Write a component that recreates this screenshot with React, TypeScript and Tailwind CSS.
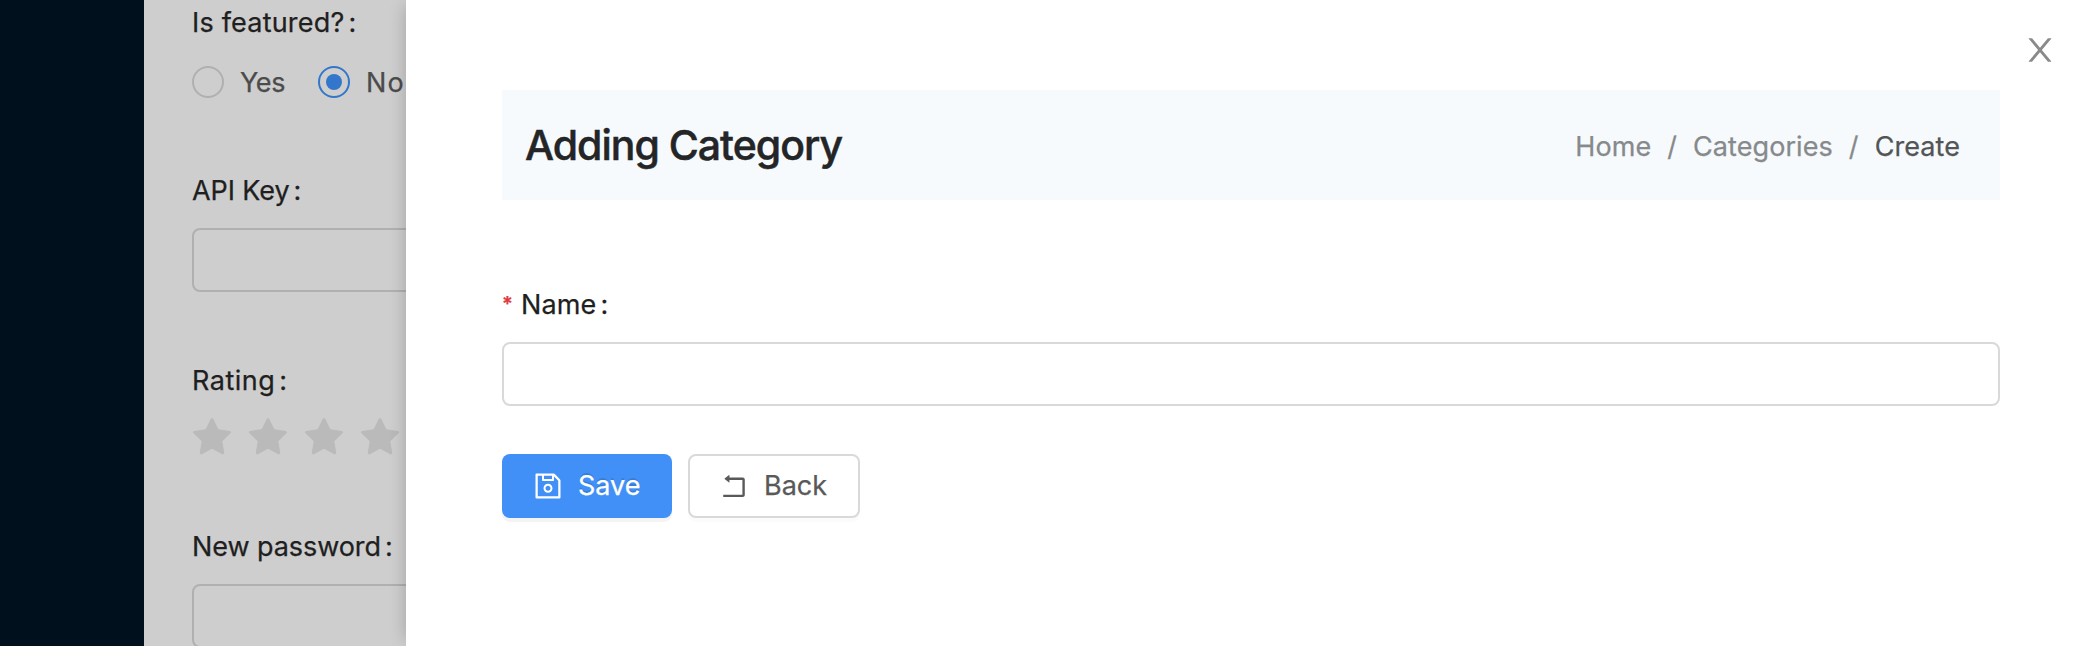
import type { ReactNode } from "react";
import { AiFillStar, AiOutlineSave } from "react-icons/ai";

const ICON_BOX = "64 64 896 896";

function Label({ children, spacing = "", required = false }: { children: ReactNode; spacing?: string; required?: boolean }) {
  return (
    <label className="flex h-11 items-center whitespace-pre pt-[2px] text-[27px] leading-[42px]">
      {required && <span className="mr-[9px] w-[10px] pb-[3px] text-[20px] font-semibold leading-[38px] text-[#e0393e]">*</span>}
      <span className={spacing}>{children}</span>
      <span className="ml-[4px]">:</span>
    </label>
  );
}

function Radio({ checked = false, spacing, children }: { checked?: boolean; spacing: string; children: ReactNode }) {
  return (
    <label className="flex h-11 items-center text-[27px] leading-[44px] text-[#4b4b4b]">
      <span className={`flex size-8 shrink-0 items-center justify-center rounded-full border-2 ${checked ? "border-[#3377cc]" : "border-[#b0b0b0]"}`}>
        {checked && <span className="size-4 rounded-full bg-[#3377cc]" />}
      </span>
      <span className={`ml-4 pt-px ${spacing}`}>{children}</span>
    </label>
  );
}

function CloseIcon() {
  return (
    <svg viewBox={ICON_BOX} className="size-8" fill="currentColor">
      <path d="M563.8 512l262.5-312.9c4.4-5.2.7-13.1-6.1-13.1h-79.8c-4.7 0-9.2 2.1-12.3 5.7L511.6 449.8 295.1 191.7c-3-3.6-7.5-5.7-12.3-5.7H203c-6.8 0-10.5 7.9-6.1 13.1L459.4 512 196.9 824.9A7.95 7.95 0 00203 838h79.8c4.7 0 9.2-2.1 12.3-5.7l216.5-258.1 216.5 258.1c3 3.6 7.5 5.7 12.3 5.7h79.8c6.8 0 10.5-7.9 6.1-13.1L563.8 512z" />
    </svg>
  );
}

function RollbackIcon() {
  return (
    <svg viewBox={ICON_BOX} className="size-7" fill="currentColor">
      <path d="M793 242H366v-74c0-6.7-7.7-10.4-12.9-6.3l-142 112a8 8 0 000 12.6l142 112c5.2 4.1 12.9.4 12.9-6.3v-74h415v470H175c-4.4 0-8 3.6-8 8v60c0 4.4 3.6 8 8 8h618c35.3 0 64-28.7 64-64V306c0-35.3-28.7-64-64-64z" />
    </svg>
  );
}

export default function App() {
  return (
    <div className="flex h-[646px] w-full overflow-hidden bg-[#cecece] font-['Inter',sans-serif] text-[#1f1f1f] [-webkit-text-stroke:0.25px_currentColor]">
      <aside className="w-36 shrink-0 bg-[#00101c]" />

      <main className="w-[262px] shrink-0 overflow-hidden pl-12">
        <div className="w-[600px]">
          <Label spacing="tracking-[0.2px]">Is featured?</Label>
          <div className="mt-4 flex gap-[33px]">
            <Radio spacing="tracking-[-0.4px]">Yes</Radio>
            <Radio checked spacing="tracking-[1px]">No</Radio>
          </div>
          <div className="mt-16">
            <Label spacing="tracking-[-0.1px]">API Key</Label>
            <div className="mt-4 h-16 rounded-lg border-2 border-[#b0b0b0]" />
          </div>
          <div className="mt-[66px]">
            <Label spacing="tracking-[0.5px]">Rating</Label>
            <div className="mt-4 flex gap-4 text-[#bababa]">
              {[1, 2, 3, 4, 5].map((n) => (
                <AiFillStar key={n} viewBox={ICON_BOX} className="size-10" />
              ))}
            </div>
          </div>
          <div className="mt-[66px]">
            <Label spacing="tracking-[-0.07px]">New password</Label>
            <div className="mt-4 h-16 rounded-lg border-2 border-[#b0b0b0]" />
          </div>
        </div>
      </main>

      <section className="relative flex-1 bg-white pr-[86px] pl-24 pt-[90px] shadow-[-6px_0_16px_-6px_rgba(0,0,0,0.22)]">
        <button className="absolute top-[34px] right-[30px] text-[#8a8a8a]" aria-label="Close">
          <CloseIcon />
        </button>

        <header className="flex h-[110px] items-center justify-between bg-[#f6fafd] pr-10 pl-[23px]">
          <h1 className="text-[41px] leading-[56px] font-medium tracking-[-1px] text-[#242527] [-webkit-text-stroke:0.5px_currentColor]">Adding Category</h1>
          <nav className="flex items-center pt-[3px] text-[27px] leading-[44px] tracking-[0.07px] text-[#87898b]">
            <span>Home</span>
            <span className="mx-4">/</span>
            <span>Categories</span>
            <span className="mx-4">/</span>
            <span className="text-[#525455]">Create</span>
          </nav>
        </header>

        <form className="mt-[82px]">
          <Label required spacing="tracking-[0.12px]">Name</Label>
          <input aria-label="Name" className="mt-4 block h-16 w-full rounded-lg border-2 border-[#d9d9d9] bg-white px-5 text-[27px] outline-none" />
          <div className="mt-12 flex gap-4">
            <button type="button" className="flex h-16 w-[170px] items-center rounded-lg bg-[#4090f7] pl-8 text-[27px] text-white shadow-[0_4px_0_rgba(0,0,0,0.045)] [text-shadow:0_-2px_0_rgba(0,0,0,0.12)]">
              <AiOutlineSave viewBox={ICON_BOX} className="size-7" />
              <span className="ml-4 pt-px">Save</span>
            </button>
            <button type="button" className="flex h-16 w-[172px] items-center rounded-lg border-2 border-[#d9d9d9] bg-white pl-[30px] text-[27px] text-[#595959] shadow-[0_4px_0_rgba(0,0,0,0.016)]">
              <RollbackIcon />
              <span className="ml-4 pt-px">Back</span>
            </button>
          </div>
        </form>
      </section>
    </div>
  );
}
